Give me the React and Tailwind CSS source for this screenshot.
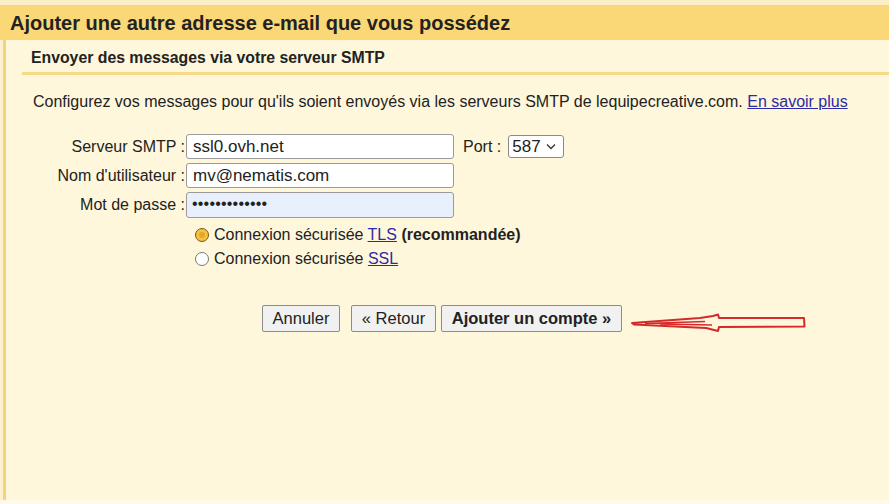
import React from "react";

function Arrow() {
  return (
    <svg
      className="absolute left-0 top-0 pointer-events-none"
      width="889"
      height="504"
      viewBox="0 0 889 504"
    >
      <path
        d="M632 323 L700 318 L713 316 L718 314.5 L719 318 L804 318 L804.5 326.5 L719 327 L718 331 L706 328 L634 324.5 Z"
        fill="none"
        stroke="#d42a2a"
        strokeWidth="2"
        strokeLinejoin="round"
      />
      <path d="M645 323.5 L705 321.5 M660 324 L712 325" fill="none" stroke="#d42a2a" strokeWidth="1.5" />
    </svg>
  );
}

export default function App() {
  const font = { fontFamily: '"Liberation Sans", Arial, sans-serif' };
  return (
    <div
      className="relative w-[889px] h-[504px] overflow-hidden bg-[#fff9ea] text-[#222]"
      style={font}
    >
      <div className="h-[5px] bg-[#fcefc8]" />
      <div className="h-[35px] bg-[#fad877] pl-[10px] flex items-center text-[20px] font-bold">
        Ajouter une autre adresse e-mail que vous possédez
      </div>
      <div className="flex h-[460px] bg-[#fbf0d0]">
        <div className="ml-[3px] w-[3px] bg-[#f3d37e]" />
        <div className="flex-1 bg-[#fff7db] flex flex-col">
          <div className="pt-[10px] pb-[6px] pl-[25px] leading-[16px] text-[15.8px] font-bold">
            Envoyer des messages via votre serveur SMTP
          </div>
          <div className="ml-[16px] h-[3px] bg-[#f7d98a]" />
          <div className="mt-[18px] pl-[27px] text-[16px] leading-[18px]">
            Configurez vos messages pour qu'ils soient envoyés via les serveurs SMTP de lequipecreative.com.{" "}
            <span className="text-[#2b2ba6] underline">En savoir plus</span>
          </div>
          <div className="mt-[23px] flex flex-col gap-[4px] text-[16px]">
            <div className="flex items-center h-[25px]">
              <div className="w-[180px] text-right pr-[1px]">Serveur SMTP :</div>
              <div className="w-[268px] h-[25px] bg-white border border-[#9a9a9a] rounded-[3px] flex items-center pl-[6px] text-[17px]">
                ssl0.ovh.net
              </div>
              <div className="ml-[9px]">Port :</div>
              <div className="ml-[7px] w-[56px] h-[23px] bg-white border border-[#8a8a8a] rounded-[3px] flex items-center pl-[3px] text-[17px]">
                587
                <svg className="ml-[5px]" width="10" height="7" viewBox="0 0 10 7">
                  <path d="M1 1.5 L5 5.5 L9 1.5" fill="none" stroke="#333" strokeWidth="1.3" />
                </svg>
              </div>
            </div>
            <div className="flex items-center h-[25px]">
              <div className="w-[180px] text-right pr-[1px]">Nom d'utilisateur :</div>
              <div className="w-[268px] h-[25px] bg-white border border-[#9a9a9a] rounded-[3px] flex items-center pl-[6px] text-[17px]">
                mv@nematis.com
              </div>
            </div>
            <div className="flex items-center h-[25px]">
              <div className="w-[180px] text-right pr-[1px]">Mot de passe :</div>
              <div className="w-[268px] h-[26px] bg-[#e8f0fe] border border-[#9a9a9a] rounded-[3px] flex items-center pl-[5px] text-[16px] tracking-[0.2px] pb-[2px]">
                •••••••••••••
              </div>
            </div>
          </div>
          <div className="mt-[6px] ml-[189px] flex flex-col text-[16px]">
            <div className="h-[24px] flex items-center">
              <div className="w-[14px] h-[14px] rounded-full bg-[#f6c042] border border-[#7a5a10] flex items-center justify-center">
                <div className="w-[6px] h-[6px] rounded-full bg-[#e4a82a]" />
              </div>
              <span className="ml-[5px]">
                Connexion sécurisée <span className="text-[#2b2ba6] underline">TLS</span>{" "}
                <span className="font-bold">(recommandée)</span>
              </span>
            </div>
            <div className="h-[24px] flex items-center">
              <div className="w-[14px] h-[14px] rounded-full bg-white border border-[#777]" />
              <span className="ml-[5px]">
                Connexion sécurisée <span className="text-[#2b2ba6] underline">SSL</span>
              </span>
            </div>
          </div>
          <div className="mt-[34px] ml-[256px] flex text-[16.5px]">
            <div className="w-[78px] h-[27px] bg-[#f1f1f1] border border-[#8c8c8c] rounded-[2px] flex items-center justify-center">
              Annuler
            </div>
            <div className="ml-[11px] w-[85px] h-[27px] bg-[#f1f1f1] border border-[#8c8c8c] rounded-[2px] flex items-center justify-center">
              « Retour
            </div>
            <div className="ml-[5px] w-[181px] h-[27px] bg-[#f1f1f1] border border-[#8c8c8c] rounded-[2px] flex items-center justify-center font-bold">
              Ajouter un compte »
            </div>
          </div>
        </div>
      </div>
      <Arrow />
    </div>
  );
}
